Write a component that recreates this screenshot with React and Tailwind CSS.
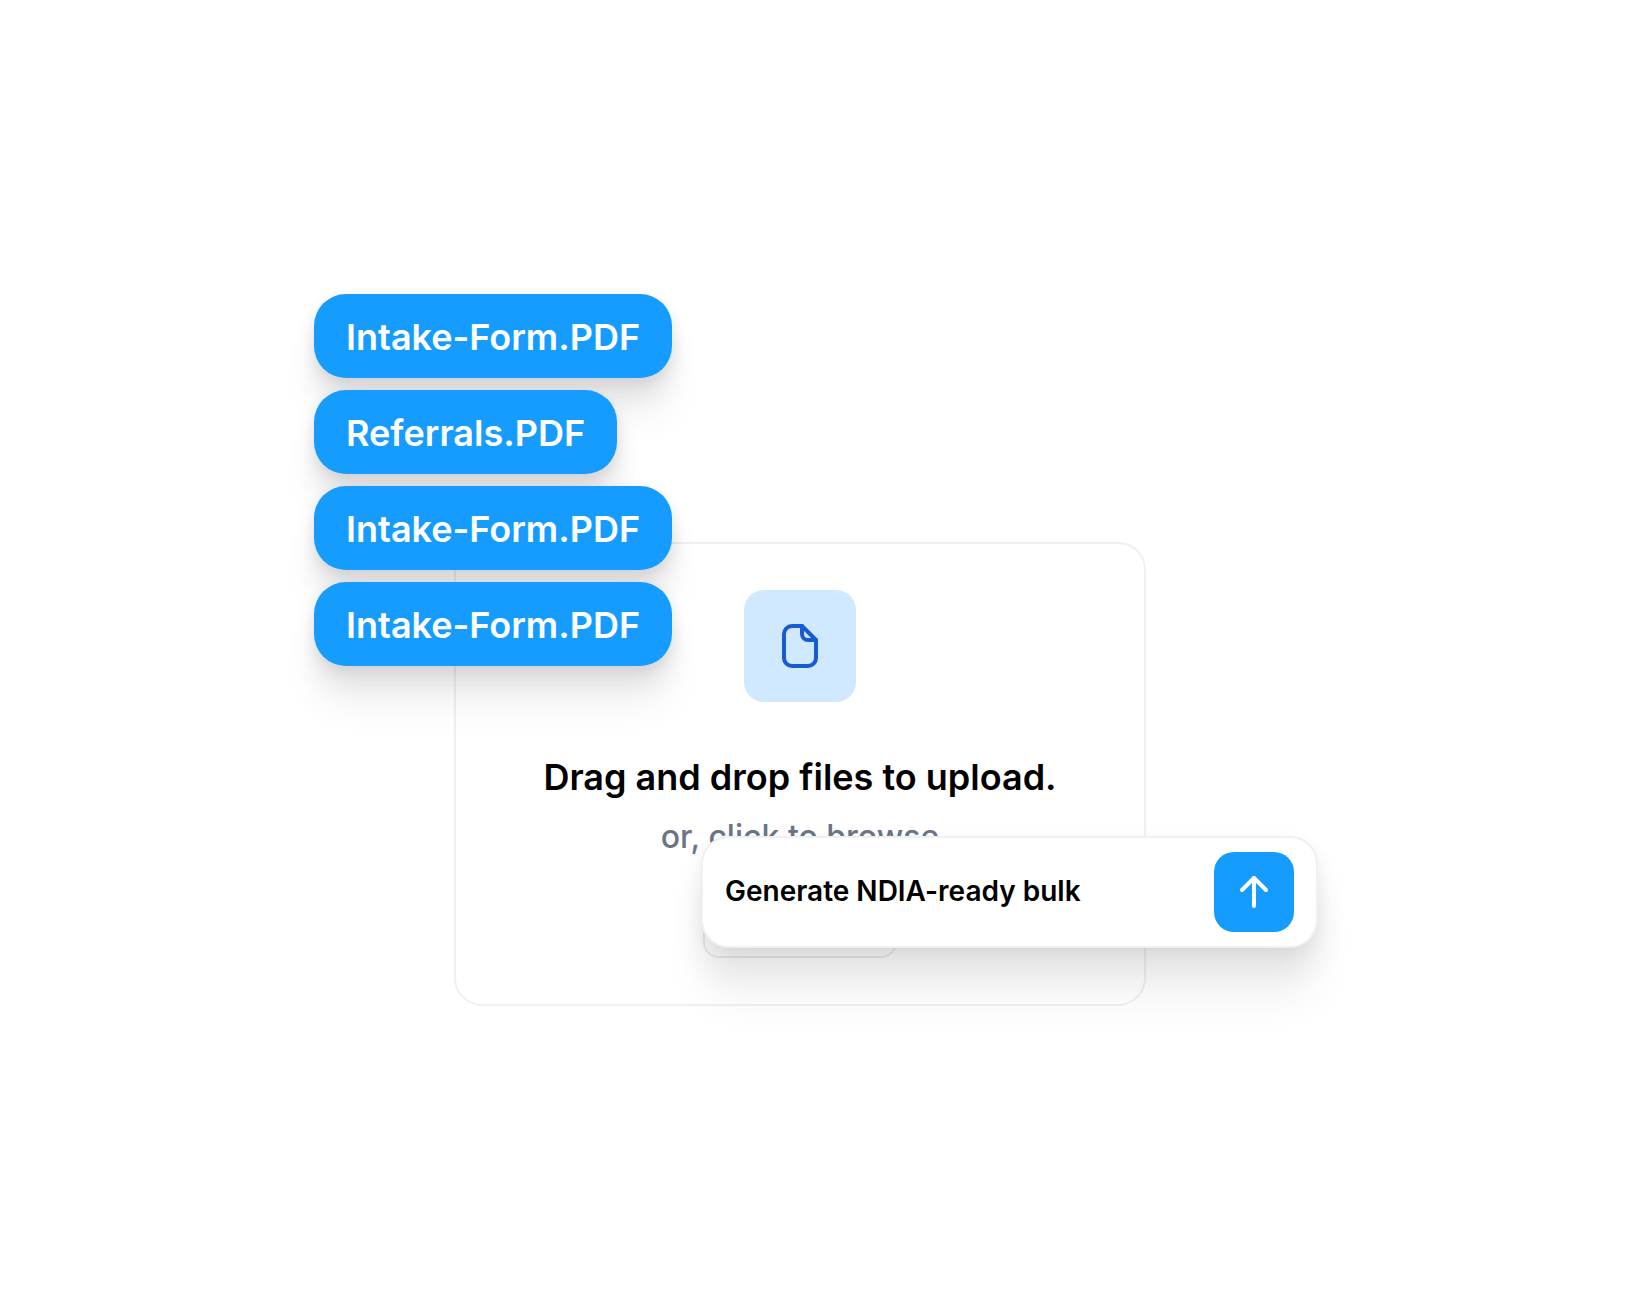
import React from "react";

const FILES = [
  { id: 1, name: "Intake-Form.PDF" },
  { id: 2, name: "Referrals.PDF" },
  { id: 3, name: "Intake-Form.PDF" },
  { id: 4, name: "Intake-Form.PDF" },
];

function FileIcon({ className }) {
  return (
    <svg
      className={className}
      viewBox="0 0 48 48"
      fill="none"
      stroke="currentColor"
      strokeWidth="4"
      strokeLinecap="round"
      strokeLinejoin="round"
      aria-hidden="true"
    >
      <path d="M26 4H16a8 8 0 0 0-8 8v24a8 8 0 0 0 8 8h16a8 8 0 0 0 8-8V18L26 4Z" />
      <path d="M26 4v8a6 6 0 0 0 6 6h8" />
    </svg>
  );
}

function ArrowUpIcon({ className }) {
  return (
    <svg
      className={className}
      viewBox="0 0 48 48"
      fill="none"
      stroke="currentColor"
      strokeWidth="4"
      strokeLinecap="round"
      strokeLinejoin="round"
      aria-hidden="true"
    >
      <path d="M24 38V10" />
      <path d="M12 22l12-12 12 12" />
    </svg>
  );
}

function FileList({ files }) {
  return (
    <ul className="absolute top-0 left-1 flex flex-col items-start gap-3">
      {files.map((file) => (
        <li
          key={file.id}
          className="flex h-21 items-center rounded-4xl bg-[#169cff] px-8 pt-0.5 text-4xl font-semibold text-white shadow-[0_4px_14px_rgba(0,0,0,0.08),0_18px_26px_rgba(0,0,0,0.08),0_40px_36px_rgba(0,0,0,0.05)]"
        >
          {file.name}
        </li>
      ))}
    </ul>
  );
}

function DropZone() {
  return (
    <section className="mr-43 ml-36 flex flex-col items-center rounded-[28px] border-2 border-[#f0f0f0] bg-white py-[46px] text-center">
      <div className="flex size-28 items-center justify-center rounded-[20px] bg-[#d1e9ff]">
        <FileIcon className="size-12 text-[#175cd3]" />
      </div>
      <h2 className="mt-13 text-4xl leading-[46px] font-semibold text-black">
        Drag and drop files to upload.
      </h2>
      <p className="mt-4 text-[32px] leading-[42px] font-medium text-[#6b7588]">
        or, click to browse
      </p>
      <button
        type="button"
        aria-label="Browse files"
        className="mt-6 h-19 w-[194px] rounded-2xl border-2 border-[#ececec] bg-white"
      />
    </section>
  );
}

function PromptBar() {
  return (
    <form
      onSubmit={(e) => e.preventDefault()}
      className="absolute right-0 bottom-[58px] flex h-28 w-[617px] items-center justify-between rounded-[28px] border-2 border-[#f0f0f0] bg-white pr-[22px] pl-[22px] shadow-[0_4px_16px_rgba(0,0,0,0.05),0_22px_32px_rgba(0,0,0,0.07),0_52px_40px_rgba(0,0,0,0.05)]"
    >
      <input
        type="text"
        aria-label="Prompt"
        defaultValue="Generate NDIA-ready bulk"
        className="min-w-0 flex-1 bg-transparent pb-0.5 text-[28px] leading-9 font-semibold text-black outline-none"
      />
      <button
        type="submit"
        aria-label="Send"
        className="flex size-20 items-center justify-center rounded-[20px] bg-[#169cff] text-white"
      >
        <ArrowUpIcon className="size-12" />
      </button>
    </form>
  );
}

export default function App() {
  return (
    <main className="flex min-h-screen items-center justify-center bg-white font-['Inter',sans-serif]">
      <div className="relative w-full max-w-[1008px] pt-[248px]">
        <DropZone />
        <FileList files={FILES} />
        <PromptBar />
      </div>
    </main>
  );
}
